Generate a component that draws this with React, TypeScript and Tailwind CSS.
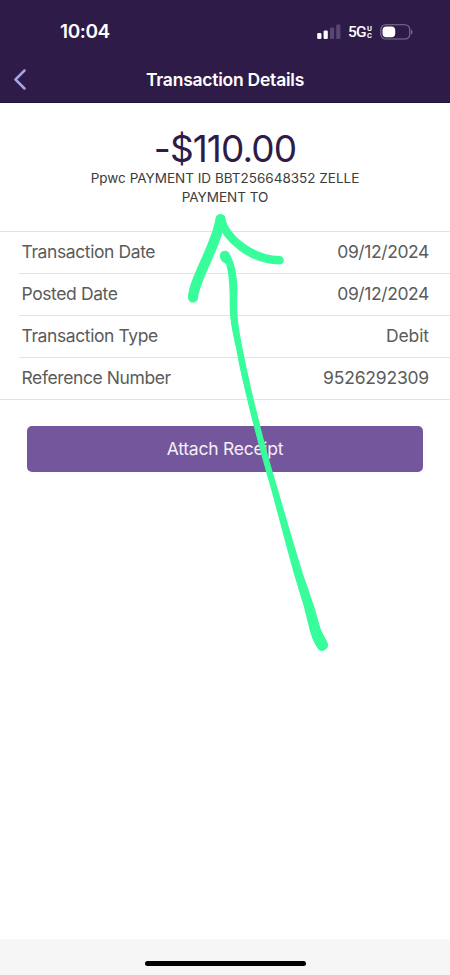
interface DetailRow {
  label: string;
  value: string;
  valueClass: string;
}

const DETAILS: DetailRow[] = [
  {
    label: "Transaction Date",
    value: "09/12/2024",
    valueClass: "tracking-[-0.4px]",
  },
  {
    label: "Posted Date",
    value: "09/12/2024",
    valueClass: "tracking-[-0.4px]",
  },
  {
    label: "Transaction Type",
    value: "Debit",
    valueClass: "tracking-[-0.1px]",
  },
  {
    label: "Reference Number",
    value: "9526292309",
    valueClass: "tracking-[-0.2px]",
  },
];

function SignalIcon() {
  return (
    <svg width="24" height="16" viewBox="0 0 24 16" aria-label="Signal">
      <rect x="0.2" y="9" width="4.2" height="6" rx="1.2" fill="#fff" />
      <rect x="6.6" y="6.5" width="4.2" height="8.5" rx="1.2" fill="#fff" />
      <rect x="13" y="3.5" width="4.2" height="11.5" rx="1.2" fill="#584770" />
      <rect x="19.2" y="0.5" width="4.2" height="14.5" rx="1.2" fill="#584770" />
    </svg>
  );
}

function BatteryIcon() {
  return (
    <svg width="34" height="16" viewBox="0 0 34 16" aria-label="Battery">
      <rect x="0.8" y="0.8" width="29" height="14.2" rx="4.8" fill="none" stroke="#827591" strokeWidth="1.1" />
      <rect x="2.5" y="2.5" width="12.7" height="10.8" rx="3.8" fill="#fff" />
      <path d="M31.2 5.500c1.700.7 1.700 4.300 0 5z" fill="#827591" />
    </svg>
  );
}

function StatusBar() {
  return (
    <div className="flex h-[58px] items-center justify-between pt-[5px] pr-[36px] pl-[60px] text-white">
      <span className="pt-px text-[19px] font-semibold tracking-[-0.4px]">10:04</span>
      <div className="flex items-center">
        <SignalIcon />
        <div className="ml-[7px] flex w-[32px] items-center font-['Roboto',sans-serif]">
          <span className="pt-px text-[15.500px] leading-[18px] font-medium tracking-[-0.9px]">5G</span>
          <span className="ml-[1.500px] flex flex-col pt-px text-[7.500px] leading-[7px] font-bold">
            <span>U</span>
            <span>C</span>
          </span>
        </div>
        <BatteryIcon />
      </div>
    </div>
  );
}

// Hand-drawn arrow that points at the payment description
function ArrowMarkup() {
  return (
    <svg
      className="pointer-events-none absolute inset-0"
      width="450"
      height="975"
      viewBox="0 0 450 975"
      fill="none"
      stroke="#37fd9b"
      strokeLinecap="round"
      strokeLinejoin="round"
      aria-hidden="true"
    >
      <path d="M193 297.500C194 279 217 245 220.600 219" strokeWidth="10.200" />
      <path d="M220.600 219C226 239 252 260 279.500 260.200" strokeWidth="8.600" />
      <path
        d="M220.500 257C219.500 250.500 227.500 249.500 229.500 255C234.500 264 236.500 276 237 290C235.700 315 237.500 326 242.300 350C247 373 250 388 255.700 410C261.700 435 268.700 462 277.400 490L292 540L302 573L313.700 607L319.700 628C321 633 324 636 327 643C329.500 648 321 653.500 318 648C313.500 641 311.300 636 309.300 626L304.600 607L294.300 573L285.300 540L272 490C264.300 464 257.300 438 250.300 410C245.300 390 240.300 370 237 350C233.300 333 229.800 320 230.300 305C230.300 290 230.500 276 226.500 263.500C223.500 262.500 221 260 220.500 257Z"
        fill="#37fd9b"
        strokeWidth="1.2"
      />
    </svg>
  );
}

export default function App() {
  return (
    <div className="relative flex h-[975px] w-[450px] flex-col overflow-hidden bg-white font-['Inter',sans-serif]">
      <header className="h-[102.500px] shrink-0 border-b border-[#24123b] bg-[#2f1b48]">
        <StatusBar />
        <div className="flex h-[43px] items-center px-[13px] text-white">
          <button aria-label="Back" className="w-5">
            <svg width="14" height="21" viewBox="0 0 14 21" fill="none">
              <path d="M11.500 1.500 2.500 10.500l9 9" stroke="#a7a3e6" strokeWidth="2.500" strokeLinecap="round" strokeLinejoin="round" />
            </svg>
          </button>
          <h1 className="flex-1 pt-px pr-5 text-center text-[17.500px] font-semibold tracking-[-0.240px]">
            Transaction Details
          </h1>
        </div>
      </header>

      <main className="flex-1">
        <section className="flex h-[128px] flex-col items-center pt-[25px] text-center">
          <p className="text-[37px] leading-[41px] tracking-[-0.9px] text-[#2f1b48]">-$110.00</p>
          <p className="w-[290px] text-[13.500px] leading-[19px] text-[#3c3c3c]">
            Ppwc PAYMENT ID BBT256648352 ZELLE PAYMENT TO
          </p>
        </section>

        <dl className="border-y-[1.500px] border-[#e3e3e3] pl-[19px]">
          {DETAILS.map((row) => (
            <div
              key={row.label}
              className="flex h-[42px] items-center justify-between border-b border-[#e3e3e3] pr-[21px] pl-[2.500px] text-[17.500px] text-[#5b5b5b] last:h-[41px] last:border-b-0"
            >
              <dt className="tracking-[-0.4px]">{row.label}</dt>
              <dd className={row.valueClass}>{row.value}</dd>
            </div>
          ))}
        </dl>

        <div className="px-[27px] pt-[26.500px]">
          <button className="h-[46px] w-full rounded-[5px] bg-[#73569b] pt-px text-[17.500px] tracking-[-0.250px] text-[#f4effa]">
            Attach Receipt
          </button>
        </div>
      </main>

      <footer className="flex h-9 shrink-0 justify-center bg-[#f6f6f6] pt-[22px]">
        <div className="h-[5px] w-[161px] rounded-full bg-black" />
      </footer>

      <ArrowMarkup />
    </div>
  );
}
